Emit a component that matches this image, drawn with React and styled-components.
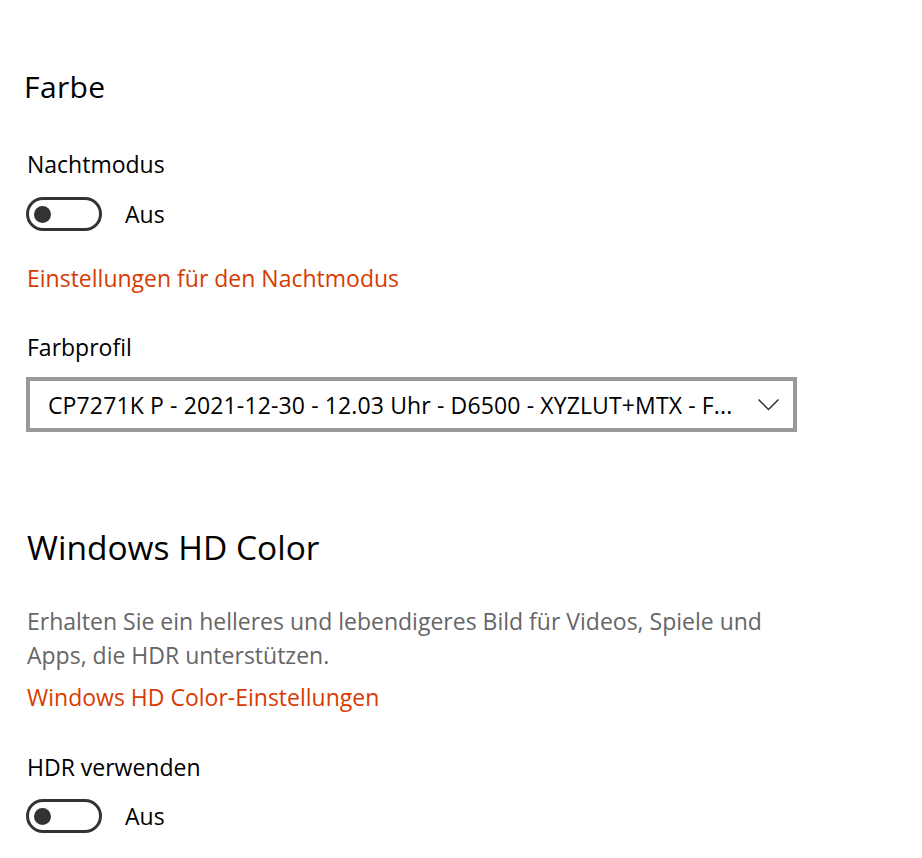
import React from "react";
import styled, { createGlobalStyle } from "styled-components";

const GlobalStyle = createGlobalStyle`
  body {
    margin: 0;
    background: #ffffff;
    font-family: "Open Sans", "Noto Sans", sans-serif;
    color: #000000;
  }
`;

const Page = styled.div`
  display: flex;
  flex-direction: column;
  align-items: flex-start;
  padding: 69px 0 0 26px;
  width: 922px;
  height: 858px;
  box-sizing: border-box;
  overflow: hidden;
`;

const Heading = styled.h2`
  margin: ${(p) => p.$mt || 0}px 0 0 ${(p) => p.$ml || 0}px;
  font-size: ${(p) => p.$size}px;
  line-height: ${(p) => p.$lh}px;
  letter-spacing: ${(p) => p.$ls || 0}px;
  font-weight: 400;
`;

const Label = styled.div`
  margin-top: ${(p) => p.$mt || 0}px;
  font-size: 23px;
  line-height: 30px;
  padding-left: 1px;
`;

const Link = styled.a`
  margin-top: ${(p) => p.$mt || 0}px;
  font-size: 23px;
  line-height: 30px;
  padding-left: 1px;
  color: #d83b01;
  text-decoration: none;
  cursor: pointer;
`;

const Description = styled.p`
  margin: ${(p) => p.$mt || 0}px 0 0;
  max-width: 771px;
  font-size: 23px;
  line-height: 34px;
  color: #666666;
  padding-left: 1px;
`;

const ToggleRow = styled.div`
  display: flex;
  align-items: center;
  gap: 23px;
  margin-top: ${(p) => p.$mt || 0}px;
  font-size: 23px;
`;

const Track = styled.div`
  width: 76px;
  height: 34px;
  box-sizing: border-box;
  border: 3px solid #333333;
  border-radius: 17px;
  display: flex;
  align-items: center;
  padding-left: 5px;
`;

const Knob = styled.span`
  width: 17px;
  height: 17px;
  border-radius: 50%;
  background: #333333;
`;

const Select = styled.div`
  margin-top: ${(p) => p.$mt || 0}px;
  width: 771px;
  height: 55px;
  box-sizing: border-box;
  border: 4px solid #999999;
  display: flex;
  align-items: center;
  justify-content: space-between;
  padding: 0 14px 0 18px;
  font-size: 23px;
  letter-spacing: 0.13px;
  white-space: nowrap;
`;

const Chevron = () => (
  <svg width="21" height="12" viewBox="0 0 21 12">
    <polyline
      points="0.5,0.5 10.5,10.5 20.5,0.5"
      fill="none"
      stroke="#333333"
      strokeWidth="1.5"
    />
  </svg>
);

function Toggle({ mt }) {
  return (
    <ToggleRow $mt={mt}>
      <Track>
        <Knob />
      </Track>
      <span>Aus</span>
    </ToggleRow>
  );
}

export default function App() {
  return (
    <>
      <GlobalStyle />
      <Page>
        <Heading $size={30} $lh={36} $ls={0.4} $ml={-2}>Farbe</Heading>
        <Label $mt={44}>Nachtmodus</Label>
        <Toggle mt={18} />
        <Link $mt={32}>Einstellungen für den Nachtmodus</Link>
        <Label $mt={39}>Farbprofil</Label>
        <Select $mt={15}>
          <span>CP7271K P - 2021-12-30 - 12.03 Uhr - D6500 - XYZLUT+MTX - F...</span>
          <Chevron />
        </Select>
        <Heading $size={33.5} $lh={44} $mt={93} $ml={1}>Windows HD Color</Heading>
        <Description $mt={35}>
          Erhalten Sie ein helleres und lebendigeres Bild für Videos, Spiele und
          Apps, die HDR unterstützen.
        </Description>
        <Link $mt={10}>Windows HD Color-Einstellungen</Link>
        <Label $mt={40}>HDR verwenden</Label>
        <Toggle mt={17} />
      </Page>
    </>
  );
}
